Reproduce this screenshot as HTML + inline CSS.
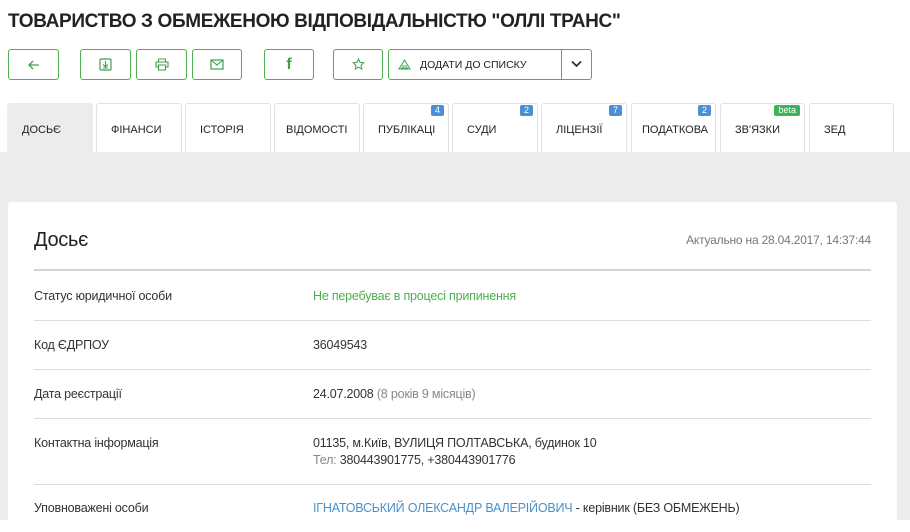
<!DOCTYPE html>
<html><head><meta charset="utf-8"><style>
*{box-sizing:border-box;margin:0;padding:0}
body{width:910px;height:520px;overflow:hidden;background:#fff;font-family:"Liberation Sans",sans-serif;color:#222;position:relative}
.a{position:absolute}
h1{position:absolute;left:8px;top:11px;font-size:19px;font-weight:bold;color:#222;letter-spacing:-0.35px;white-space:nowrap}
.btn{position:absolute;top:49px;height:31px;border:1px solid #4caf50;border-radius:3px;display:flex;align-items:center;justify-content:center;color:#3f9f4f}
.tab{position:absolute;top:103px;height:49px;border:1px solid #e2e2e2;border-bottom:none;border-radius:3px 3px 0 0;background:#fff;font-size:11px;color:#222;padding:20px 0 0 14px;white-space:nowrap;letter-spacing:0}
.badge{position:absolute;top:1px;right:4px;background:#4a90d9;color:#fff;font-size:9px;height:11px;line-height:11px;padding:0 4px;border-radius:2px}
.gray{position:absolute;left:0;top:152px;width:910px;height:368px;background:#ececec}
.card{position:absolute;left:8px;top:202px;width:889px;height:330px;background:#fff;border-radius:3px}
.row{position:absolute;left:34px;width:837px;font-size:12.5px;color:#333;letter-spacing:-0.2px;line-height:17px}
.sep{position:absolute;left:34px;width:837px;height:1px;background:#ddd}
.v{position:absolute;left:279px;top:0;white-space:nowrap}
</style></head><body>
<h1>ТОВАРИСТВО З ОБМЕЖЕНОЮ ВІДПОВІДАЛЬНІСТЮ "ОЛЛІ ТРАНС"</h1>
<div class="btn" style="left:8px;width:51px"><svg width="12" height="12" viewBox="0 0 12 12"><path d="M11 6H1M5 2L1 6l4 4" fill="none" stroke="#3f9f4f" stroke-width="1.3"/></svg></div>
<div class="btn" style="left:80px;width:51px"><svg width="13" height="13" viewBox="0 0 13 13"><rect x="1" y="1" width="11" height="11" rx="1" fill="none" stroke="#3f9f4f" stroke-width="1.2"/><path d="M6.5 3v6M4 6.5l2.5 2.5L9 6.5M4 10h5" fill="none" stroke="#3f9f4f" stroke-width="1.1"/></svg></div>
<div class="btn" style="left:136px;width:51px"><svg width="14" height="13" viewBox="0 0 14 13"><path d="M3.5 4V1h7v3M3.5 9H1V4h12v5h-2.5M3.5 7h7v5h-7z" fill="none" stroke="#3f9f4f" stroke-width="1.1"/></svg></div>
<div class="btn" style="left:192px;width:50px"><svg width="14" height="11" viewBox="0 0 14 11"><rect x="1" y="1" width="12" height="9" fill="none" stroke="#3f9f4f" stroke-width="1.2"/><path d="M1 1l6 5 6-5" fill="none" stroke="#3f9f4f" stroke-width="1.1"/></svg></div>
<div class="btn" style="left:264px;width:50px;font-weight:bold;font-size:16px">f</div>
<div class="btn" style="left:333px;width:50px"><svg width="13" height="13" viewBox="0 0 13 13"><path d="M6.5 1l1.6 3.4 3.7.4-2.8 2.5.8 3.7-3.3-1.9-3.3 1.9.8-3.7L1.2 4.8l3.7-.4z" fill="none" stroke="#3f9f4f" stroke-width="1"/></svg></div>
<div class="btn" style="left:388px;width:204px;justify-content:flex-start">
<svg style="margin-left:9px" width="13" height="11" viewBox="0 0 13 11"><path d="M6.5 1L12 10H1z M4 7h5 M3 9h7" fill="none" stroke="#3f9f4f" stroke-width="1"/></svg>
<span style="margin-left:9px;font-size:10.5px;color:#222">ДОДАТИ ДО СПИСКУ</span>
<div style="position:absolute;left:172px;top:0;width:1px;height:29px;background:#4caf50"></div>
<svg style="position:absolute;left:182px;top:10px" width="11" height="8" viewBox="0 0 11 8"><path d="M1 1.5l4.5 4.5L10 1.5" fill="none" stroke="#333" stroke-width="1.8"/></svg>
</div>
<div class="gray"></div>
<div class="tab" style="left:7px;width:86px;background:#ececec;border-color:#ececec">ДОСЬЄ</div>
<div class="tab" style="left:96px;width:86px">ФІНАНСИ</div>
<div class="tab" style="left:185px;width:86px">ІСТОРІЯ</div>
<div class="tab" style="left:274px;width:86px;padding-left:11px">ВІДОМОСТІ</div>
<div class="tab" style="left:363px;width:86px">ПУБЛІКАЦІ<span class="badge">4</span></div>
<div class="tab" style="left:452px;width:86px">СУДИ<span class="badge">2</span></div>
<div class="tab" style="left:541px;width:86px">ЛІЦЕНЗІЇ<span class="badge">7</span></div>
<div class="tab" style="left:631px;width:85px;padding-left:10px">ПОДАТКОВА<span class="badge">2</span></div>
<div class="tab" style="left:720px;width:85px">ЗВ'ЯЗКИ<span class="badge" style="background:#3cb55a">beta</span></div>
<div class="tab" style="left:809px;width:85px">ЗЕД</div>
<div class="card"></div>
<div class="a" style="left:34px;top:229px;font-size:20px;color:#222;letter-spacing:-0.3px">Досьє</div>
<div class="a" style="right:39px;top:233px;font-size:12px;color:#777;letter-spacing:-0.2px;white-space:nowrap">Актуально на 28.04.2017, 14:37:44</div>
<div class="sep" style="top:269px;height:2px;background:#d4d4d4"></div>
<div class="row" style="top:288px">Статус юридичної особи<span class="v" style="color:#4caf50">Не перебуває в процесі припинення</span></div>
<div class="sep" style="top:320px"></div>
<div class="row" style="top:337px">Код ЄДРПОУ<span class="v">36049543</span></div>
<div class="sep" style="top:369px"></div>
<div class="row" style="top:386px">Дата реєстрації<span class="v">24.07.2008 <span style="color:#888">(8 років 9 місяців)</span></span></div>
<div class="sep" style="top:418px"></div>
<div class="row" style="top:435px">Контактна інформація<span class="v">01135, м.Київ, ВУЛИЦЯ ПОЛТАВСЬКА, будинок 10<br><span style="color:#888">Тел:</span> 380443901775, +380443901776</span></div>
<div class="sep" style="top:484px"></div>
<div class="row" style="top:500px">Уповноважені особи<span class="v"><span style="color:#4a90c8">ІГНАТОВСЬКИЙ ОЛЕКСАНДР ВАЛЕРІЙОВИЧ</span> - керівник (БЕЗ ОБМЕЖЕНЬ)</span></div>
</body></html>
